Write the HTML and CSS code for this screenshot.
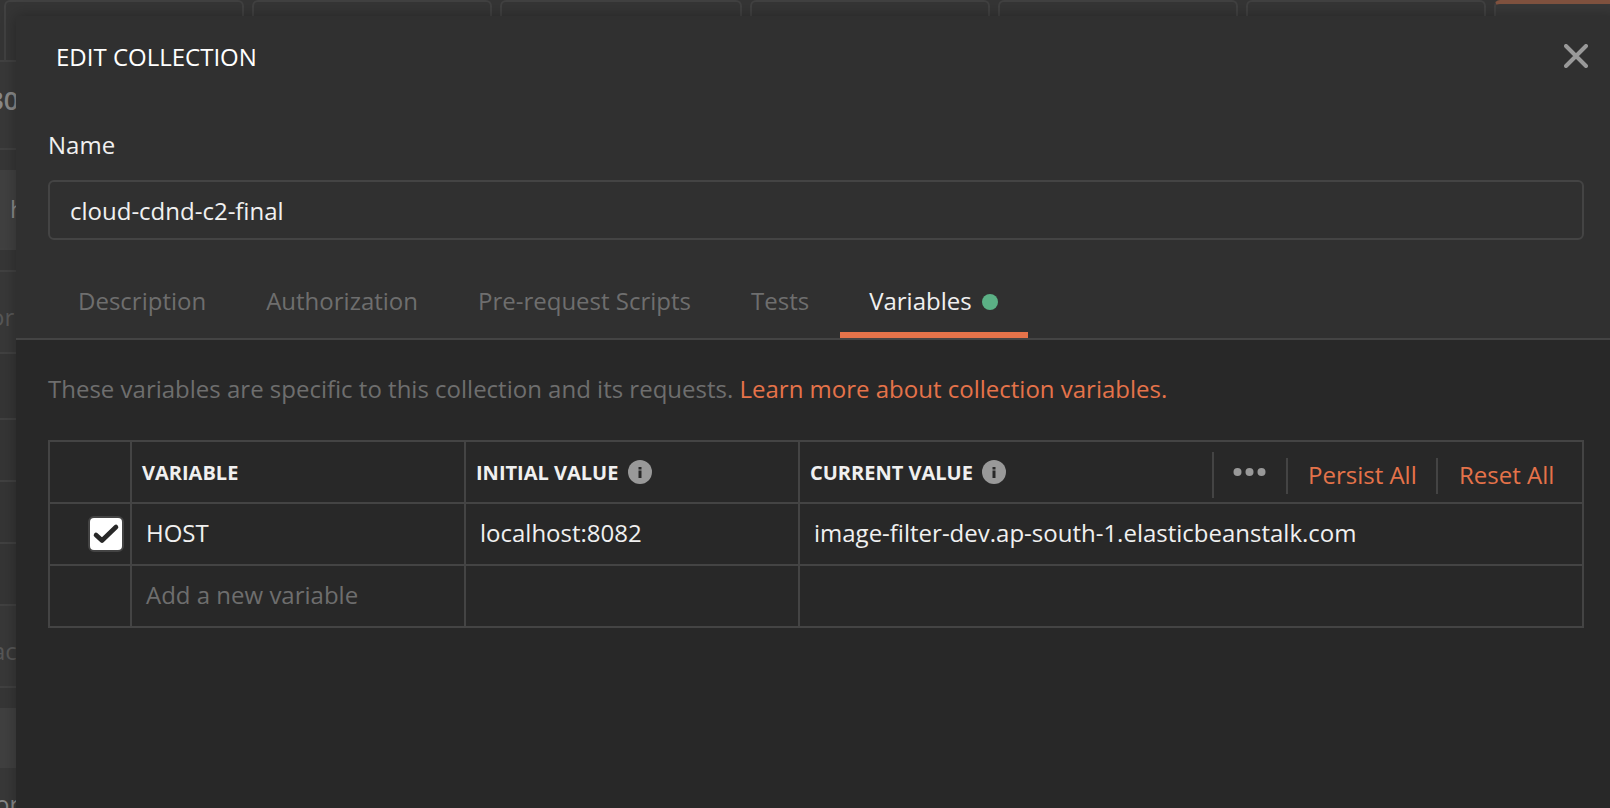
FILE: index.html
```html
<!DOCTYPE html>
<html lang="en">
<head>
<meta charset="utf-8">
<title>Edit Collection</title>
<link rel="stylesheet" href="styles.css">
</head>
<body>
<div class="app">
  <div class="app-tabs">
    <div class="app-tab"></div><div class="app-tab"></div><div class="app-tab app-tab-wide"></div><div class="app-tab"></div><div class="app-tab"></div><div class="app-tab"></div><div class="app-tab app-tab-active"></div>
  </div>
  <div class="app-side">
    <div class="side-row side-title"><span>30</span></div>
    <div class="side-gap"></div>
    <div class="side-row side-url"><span>h</span></div>
    <div class="side-gap side-gap-line"></div>
    <div class="side-row side-tab"><span>or</span></div>
    <div class="side-row side-h64"></div>
    <div class="side-row side-h62"></div>
    <div class="side-row side-h62"></div>
    <div class="side-row side-h62"></div>
    <div class="side-row side-body"><span>ac</span></div>
    <div class="side-gap"></div>
    <div class="side-block"></div>
    <div class="side-last"><span>or</span></div>
  </div>
</div>

<div class="modal">
  <header class="modal-head">
    <h1 class="modal-title">EDIT COLLECTION</h1>
    <svg class="close" viewBox="0 0 24 24"><path d="M2 2 22 22M22 2 2 22"/></svg>
  </header>
  <div class="name-field">
    <label class="name-label">Name</label>
    <div class="name-input">cloud-cdnd-c2-final</div>
  </div>
  <nav class="tabs">
    <span class="tab">Description</span>
    <span class="tab">Authorization</span>
    <span class="tab">Pre-request Scripts</span>
    <span class="tab">Tests</span>
    <span class="tab tab-active">Variables<i class="dot"></i></span>
  </nav>
  <section class="panel">
    <p class="hint">These variables are specific to this collection and its requests. <a class="link">Learn more about collection variables.</a></p>
    <div class="grid">
      <div class="cell"></div>
      <div class="cell head">VARIABLE</div>
      <div class="cell head">INITIAL VALUE
        <svg class="info" viewBox="0 0 24 24"><circle cx="12" cy="12" r="12"/><path d="M10.5 7h3v2.4h-3zM10.5 10.6h3V18h-3z"/></svg>
      </div>
      <div class="cell head">CURRENT VALUE
        <svg class="info" viewBox="0 0 24 24"><circle cx="12" cy="12" r="12"/><path d="M10.5 7h3v2.4h-3zM10.5 10.6h3V18h-3z"/></svg>
        <div class="actions">
          <div class="more"><svg viewBox="0 0 34 8"><circle cx="4.5" cy="4" r="4"/><circle cx="16.5" cy="4" r="4"/><circle cx="28.5" cy="4" r="4"/></svg></div>
          <span class="action persist">Persist All</span>
          <span class="action reset">Reset All</span>
        </div>
      </div>
      <div class="cell check-cell"><span class="checkbox"><svg viewBox="0 0 32 32"><path d="M6 17 12 22.5 26 9"/></svg></span></div>
      <div class="cell">HOST</div>
      <div class="cell">localhost:8082</div>
      <div class="cell">image-filter-dev.ap-south-1.elasticbeanstalk.com</div>
      <div class="cell"></div>
      <div class="cell muted">Add a new variable</div>
      <div class="cell"></div>
      <div class="cell"></div>
    </div>
  </section>
</div>
</body>
</html>
```
FILE: styles.css
```css
* { box-sizing: border-box; }
body {
  margin: 0;
  width: 1610px;
  height: 808px;
  overflow: hidden;
  position: relative;
  background: #383838;
  color: #f0f0f0;
  font: 24px/34px "Open Sans", "Noto Sans", sans-serif;
}

/* Dimmed application behind the dialog */
.app { height: 808px; overflow: hidden; }
.app-tabs {
  display: flex;
  gap: 8px;
  height: 62px;
  padding-left: 4px;
  border-bottom: 2px solid #414141;
  background: #353535;
}
.app-tab {
  flex: none;
  width: 240px;
  border: 2px solid #414141;
  border-bottom: 0;
  border-radius: 6px 6px 0 0;
}
.app-tab-wide { width: 242px; }
.app-tab-active { border-top: 4px solid #80523f; background: #383838; }
.app-side { width: 16px; overflow: hidden; white-space: nowrap; }
.side-row {
  display: flex;
  align-items: center;
  border-bottom: 2px solid #414141;
}
.side-row span, .side-last span { flex: none; }
.side-title { height: 88px; font-size: 26px; font-weight: 600; color: #888; padding-bottom: 11px; }
.side-title span { margin-left: -11px; }
.side-gap { height: 20px; background: #363636; }
.side-url { height: 80px; background: #404040; color: #888; }
.side-url span { margin-left: 10px; }
.side-gap-line { height: 22px; border-bottom: 2px solid #414141; }
.side-tab { height: 82px; color: #575757; padding-top: 9px; }
.side-tab span { margin-left: -10px; }
.side-h64 { height: 66px; background: #353535; }
.side-h62 { height: 62px; background: #353535; }
.side-body { height: 82px; color: #575757; padding-top: 9px; }
.side-body span { margin-left: -8px; }
.side-block { height: 60px; background: #404040; }
.side-last { display: flex; height: 60px; padding-top: 19px; color: #888; }
.side-last span { margin-left: -5px; }

/* Dialog */
.modal {
  position: absolute;
  left: 16px;
  top: 16px;
  width: 1600px;
  height: 800px;
  display: flex;
  flex-direction: column;
  background: #303030;
  box-shadow: 0 0 14px rgba(0, 0, 0, .3);
}
.modal-head {
  display: flex;
  justify-content: space-between;
  align-items: center;
  height: 80px;
  padding: 0 28px 0 40px;
}
.modal-title { margin: 1px 0 0; font-size: 24px; font-weight: 400; color: #fff; }
.close {
  width: 24px;
  height: 24px;
  fill: none;
  stroke: #999;
  stroke-width: 4;
  stroke-linecap: round;
}
.name-field { padding: 32px 32px 0; height: 144px; }
.name-label { display: block; height: 52px; }
.name-input {
  width: 1536px;
  height: 60px;
  padding: 12px 20px;
  border: 2px solid #444;
  border-radius: 6px;
}
.tabs {
  display: flex;
  height: 100px;
  padding: 28px 32px 0;
  border-bottom: 2px solid #444;
}
.tab {
  display: flex;
  align-items: center;
  padding: 2px 30px 0;
  border-bottom: 6px solid transparent;
  color: #6e6e6e;
}
.tab-active { margin-left: 1px; padding-left: 29px; color: #f0f0f0; border-color: #e5734a; }
.dot { width: 16px; height: 16px; margin: 2px 0 0 10px; border-radius: 50%; background: #5bb085; }
.panel { flex: 1; padding: 32px; background: #282828; }
.hint { margin: 0 0 34px; color: #6e6e6e; }
.link, .action { color: #e5734a; }

/* Variables table */
.grid {
  display: grid;
  grid-template-columns: 82px 334px 334px 784px;
  grid-template-rows: repeat(3, 62px);
  width: 1536px;
  border: solid #444;
  border-width: 2px 0 0 2px;
}
.cell {
  display: flex;
  align-items: center;
  padding: 0 0 3px 14px;
  border: solid #444;
  border-width: 0 2px 2px 0;
}
.head { padding: 1px 0 0 10px; font-size: 20px; font-weight: 700; }
.info { width: 24px; height: 24px; margin: -2px 0 0 9.5px; fill: #999; }
.info path { fill: #282828; }
.actions { display: flex; align-items: center; margin: 7px 2px 0 auto; font-size: 24px; font-weight: 400; }
.more { display: flex; align-items: center; width: 74px; height: 46px; margin-top: -2px; padding: 0 0 6px 19px; border-left: 2px solid #444; }
.more svg { width: 34px; height: 8px; fill: #999; }
.action { height: 36px; line-height: 34px; border-left: 2px solid #444; }
.persist { width: 150px; padding-left: 20px; }
.reset { width: 144px; padding-left: 21px; }
.check-cell { justify-content: flex-end; padding: 0 6px 0 0; }
.checkbox { width: 36px; height: 36px; border: 2px solid #444; border-radius: 6px; background: #fff; }
.checkbox svg { display: block; width: 32px; height: 32px; fill: none; stroke: #282828; stroke-width: 4.6; stroke-linecap: round; stroke-linejoin: round; }
.muted { color: #6e6e6e; }
```
